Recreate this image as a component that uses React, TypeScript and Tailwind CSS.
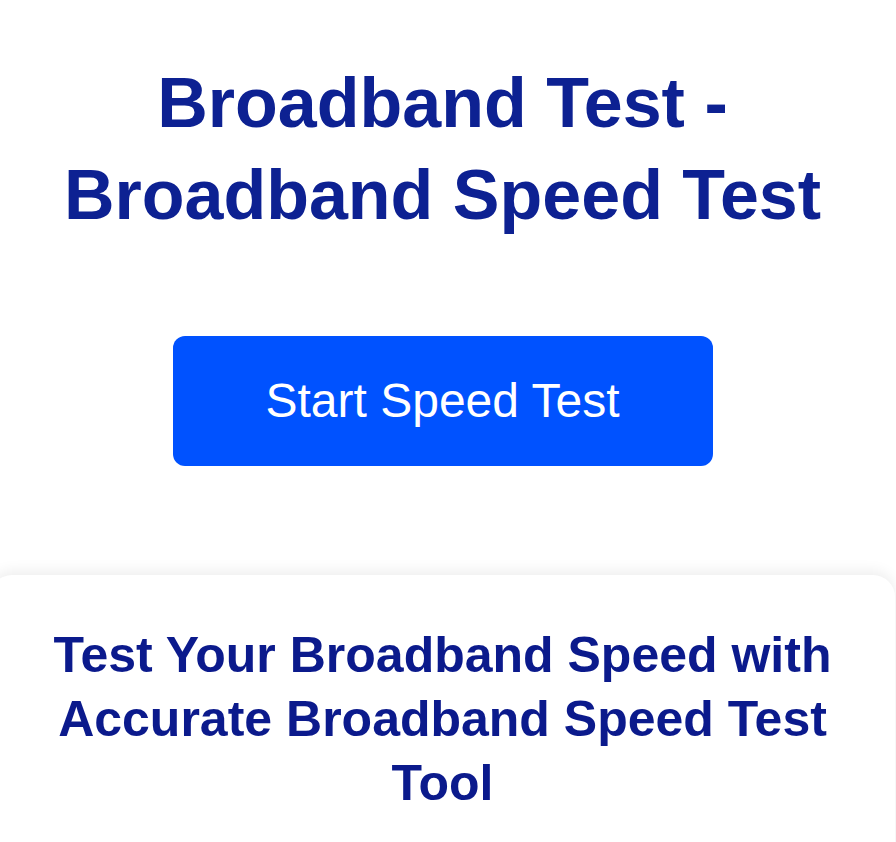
export default function App() {
  return (
    <div className="min-h-screen overflow-hidden bg-white font-['Liberation_Sans',Arial,sans-serif]">
      <div className="flex w-[885px] flex-col items-center">
        <h1 className="mt-[57px] text-center text-[70px] font-bold leading-[92px] text-[#0d2192]">
          Broadband Test -<br />
          Broadband Speed Test
        </h1>
        <button className="mt-[95px] h-[130px] w-[540px] rounded-[12px] bg-[#0052ff] text-[48px] text-white">
          Start Speed Test
        </button>
        <section className="-ml-[10px] mt-[109px] w-[905px] self-start rounded-t-[22px] bg-white px-[30px] pb-[40px] pt-[48px] shadow-[0_-4px_14px_rgba(0,0,0,0.07)]">
          <h2 className="text-center text-[50px] font-bold leading-[64px] text-[#0b1a8c]">
            Test Your Broadband Speed with Accurate Broadband Speed Test Tool
          </h2>
        </section>
      </div>
    </div>
  )
}
